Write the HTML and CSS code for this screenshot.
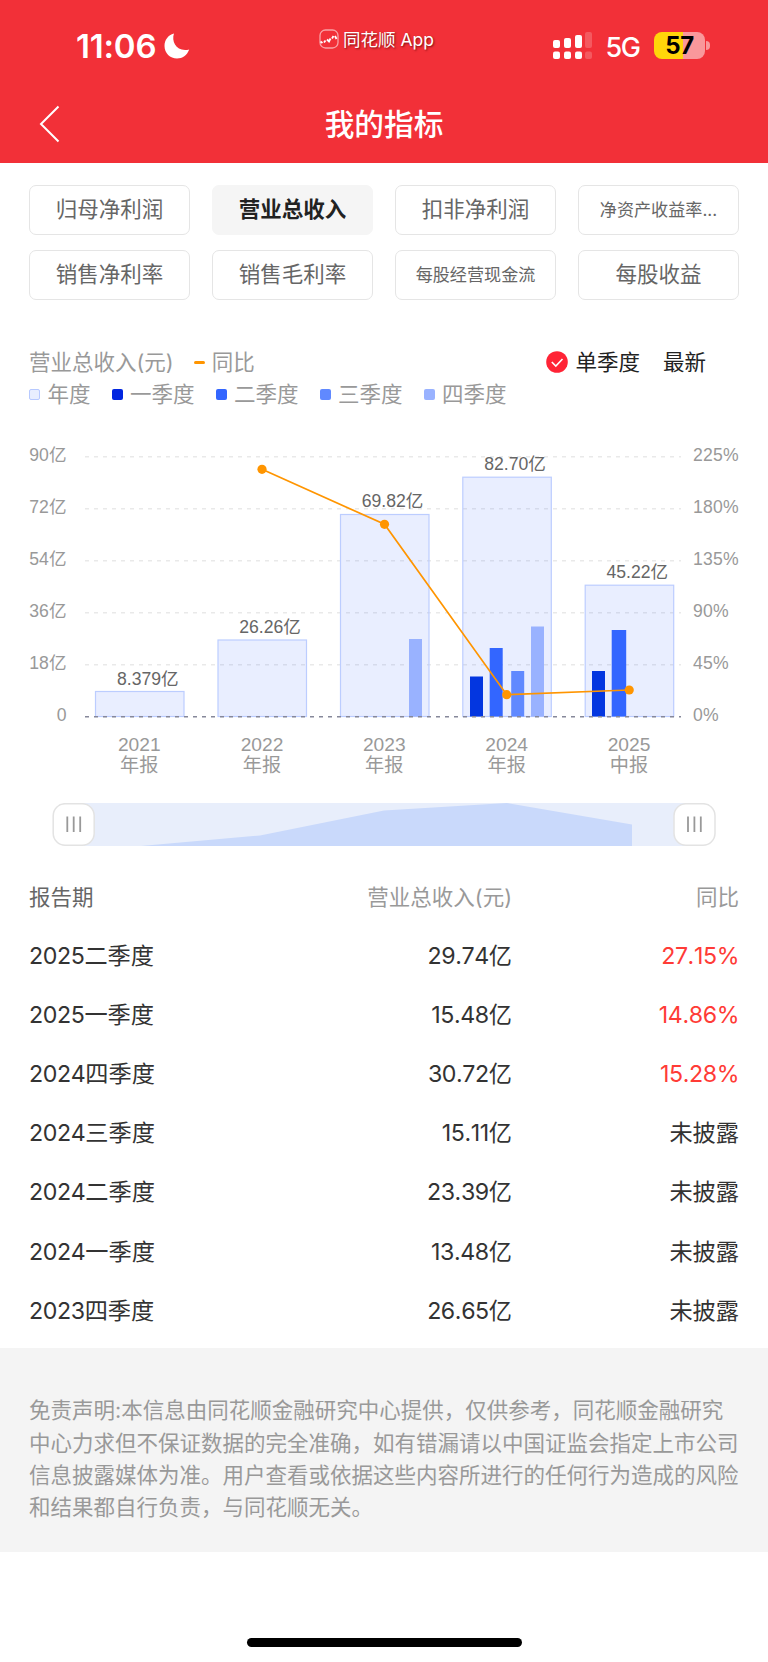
FILE: index.html
```
<!DOCTYPE html>
<html lang="zh-CN">
<head>
    <meta charset="UTF-8">
    <meta name="viewport" content="width=device-width, initial-scale=1.0">
    <title>我的指标</title>
    <link rel="stylesheet" href="styles.css">
</head>
<body>
    <header>
        <div class="status-bar">
            <div class="status-left">
                <span class="time">11:06</span>
                <svg class="moon" width="26" height="26" viewBox="0 0 26 26"><path d="M10 .5C7 9 13 19.500 25.200 16.500C23 22.500 18.500 25.500 13 25.500C6 25.500.500 20 .500 13C.500 7 4 2.200 10 .500Z" fill="#fff"/></svg>
            </div>
            <div class="app-mark">
                <svg width="20" height="20" viewBox="0 0 20 20" fill="none" stroke="#fff">
                    <rect x="1" y="1" width="18" height="18" rx="5.500" stroke-opacity=".55" stroke-width="1.300"/>
                    <path d="M1.500 12.500l2 1.500M5 13.500l1.500-2M8 10.500l2 2 1.500-3M13 9.500l1.500-2.500M16 7l1.500 3" stroke-width="1.800"/>
                </svg>
                <span>同花顺 App</span>
            </div>
            <div class="status-right">
                <svg class="signal" width="40" height="28" viewBox="0 0 40 28" fill="#fff">
                    <rect x="0" y="8" width="7" height="8" rx="2"/>
                    <rect x="11" y="6" width="7" height="10" rx="2"/>
                    <rect x="22" y="3" width="7" height="13" rx="2"/>
                    <rect x="32" y="0" width="7" height="16" rx="2" opacity=".2"/>
                    <rect x="0" y="19.500" width="7" height="7.500" rx="2"/>
                    <rect x="11" y="19.500" width="7" height="7.500" rx="2"/>
                    <rect x="22" y="19.500" width="7" height="7.500" rx="2"/>
                    <rect x="32" y="19.500" width="7" height="7.500" rx="2" opacity=".2"/>
                </svg>
                <span class="network">5G</span>
                <span class="battery">57</span>
                <span class="battery-cap"></span>
            </div>
        </div>
        <div class="title-bar">
            <svg class="back" width="22" height="38" viewBox="0 0 22 38"><path d="M19.500 1.500L2 19L19.500 36.500" fill="none" stroke="#fff" stroke-width="2"/></svg>
            <h1>我的指标</h1>
        </div>
    </header>

    <nav>
        <a>归母净利润</a>
        <a class="active">营业总收入</a>
        <a>扣非净利润</a>
        <a class="small">净资产收益率...</a>
        <a>销售净利率</a>
        <a>销售毛利率</a>
        <a class="small">每股经营现金流</a>
        <a>每股收益</a>
    </nav>

    <section class="chart">
        <div class="legend">
            <span>营业总收入(元)</span>
            <span class="dash"></span>
            <span>同比</span>
            <div class="options">
                <svg width="22" height="22" viewBox="0 0 22 22"><circle cx="11" cy="11" r="10.800" fill="#ff2436"/><path d="M5.800 11L9.800 15L16.500 8" fill="none" stroke="#fff" stroke-width="1.600"/></svg>
                <span>单季度</span>
                <span class="latest">最新</span>
            </div>
        </div>
        <div class="legend quarters">
            <span class="item"><i class="year"></i>年度</span>
            <span class="item"><i class="q1"></i>一季度</span>
            <span class="item"><i class="q2"></i>二季度</span>
            <span class="item"><i class="q3"></i>三季度</span>
            <span class="item"><i class="q4"></i>四季度</span>
        </div>

        <svg class="plot" width="768" height="360" viewBox="0 430 768 360">
            <!-- 网格线 -->
            <g class="grid">
                <path d="M85 456.700H681M85 508.800H681M85 560.800H681M85 612.800H681M85 664.800H681"/>
            </g>
            <!-- 年度柱 -->
            <g class="annual">
                <rect x="95.500" y="691.500" width="88.500" height="25"/>
                <rect x="218" y="640" width="88.500" height="76.500"/>
                <rect x="340.500" y="514.500" width="88.500" height="202"/>
                <rect x="462.800" y="477.200" width="88.500" height="239.300"/>
                <rect x="585.200" y="585.200" width="88.500" height="131.300"/>
            </g>
            <!-- 季度柱 -->
            <rect class="q4" x="409" y="639" width="13" height="77.500"/>
            <rect class="q1" x="470" y="676.500" width="13" height="40"/>
            <rect class="q2" x="489.700" y="648" width="13" height="68.500"/>
            <rect class="q3" x="511.200" y="671" width="13" height="45.500"/>
            <rect class="q4" x="531" y="626.500" width="13" height="90"/>
            <rect class="q1" x="592" y="671" width="13" height="45.500"/>
            <rect class="q2" x="611.700" y="630" width="14.500" height="86.500"/>
            <path class="base" d="M85 716.700H681"/>
            <!-- 同比 -->
            <path class="line" d="M262 469.300L384.500 524.300L506.700 694.700L629.200 690"/>
            <g class="dots">
                <circle cx="262" cy="469.300" r="4.600"/>
                <circle cx="384.500" cy="524.300" r="4.600"/>
                <circle cx="506.700" cy="694.700" r="4.600"/>
                <circle cx="629.200" cy="690" r="4.600"/>
            </g>
            <g class="axis left">
                <text x="66.500" y="461">90亿</text>
                <text x="66.500" y="513">72亿</text>
                <text x="66.500" y="565">54亿</text>
                <text x="66.500" y="617">36亿</text>
                <text x="66.500" y="669">18亿</text>
                <text x="66.500" y="721">0</text>
            </g>
            <g class="axis right">
                <text x="693" y="461">225%</text>
                <text x="693" y="513">180%</text>
                <text x="693" y="565">135%</text>
                <text x="693" y="617">90%</text>
                <text x="693" y="669">45%</text>
                <text x="693" y="721">0%</text>
            </g>
            <g class="values">
                <text x="147.800" y="684.500">8.379亿</text>
                <text x="270" y="633.200">26.26亿</text>
                <text x="392.500" y="507">69.82亿</text>
                <text x="515" y="470">82.70亿</text>
                <text x="637.300" y="578">45.22亿</text>
            </g>
            <g class="periods">
                <text x="139.300" y="751">2021</text><text x="139.300" y="771.500">年报</text>
                <text x="262" y="751">2022</text><text x="262" y="771.500">年报</text>
                <text x="384.300" y="751">2023</text><text x="384.300" y="771.500">年报</text>
                <text x="506.700" y="751">2024</text><text x="506.700" y="771.500">年报</text>
                <text x="629" y="751">2025</text><text x="629" y="771.500">中报</text>
            </g>
        </svg>

        <!-- 时间范围滑块 -->
        <svg class="slider" width="768" height="44" viewBox="0 0 768 44">
            <rect x="73" y="0" width="622" height="43" fill="#e8eefb"/>
            <path d="M141 43L260 32.500L384 7.500L507 0L632 21.500V43Z" fill="#c9d9fb"/>
            <g class="handle">
                <rect x="53.200" y=".7" width="41" height="41.500" rx="12"/>
                <path d="M67.300 13.500V29M73.700 13.500V29M80.200 13.500V29"/>
            </g>
            <g class="handle">
                <rect x="674" y=".7" width="41" height="41.500" rx="12"/>
                <path d="M688 13.500V29M694.400 13.500V29M700.800 13.500V29"/>
            </g>
        </svg>
    </section>

    <table>
        <thead>
            <tr><th>报告期</th><th>营业总收入(元)</th><th>同比</th></tr>
        </thead>
        <tbody>
            <tr><td><b>2025</b>二季度</td><td><b>29.74</b>亿</td><td class="up"><b>27.15%</b></td></tr>
            <tr><td><b>2025</b>一季度</td><td><b>15.48</b>亿</td><td class="up"><b>14.86%</b></td></tr>
            <tr><td><b>2024</b>四季度</td><td><b>30.72</b>亿</td><td class="up"><b>15.28%</b></td></tr>
            <tr><td><b>2024</b>三季度</td><td><b>15.11</b>亿</td><td>未披露</td></tr>
            <tr><td><b>2024</b>二季度</td><td><b>23.39</b>亿</td><td>未披露</td></tr>
            <tr><td><b>2024</b>一季度</td><td><b>13.48</b>亿</td><td>未披露</td></tr>
            <tr><td><b>2023</b>四季度</td><td><b>26.65</b>亿</td><td>未披露</td></tr>
        </tbody>
    </table>

    <footer>
        <p>免责声明:本信息由同花顺金融研究中心提供，仅供参考，同花顺金融研究<br>中心力求但不保证数据的完全准确，如有错漏请以中国证监会指定上市公司<br>信息披露媒体为准。用户查看或依据这些内容所进行的任何行为造成的风险<br>和结果都自行负责，与同花顺无关。</p>
    </footer>
    <div class="home-indicator"></div>
</body>
</html>
```
FILE: styles.css
```
* {
    box-sizing: border-box;
}
body {
    font-family: Inter, "Noto Sans CJK SC", sans-serif;
    background-color: #fff;
    color: #333;
    margin: 0;
    font-size: 21.5px;
}
svg {
    display: block;
    flex: none;
}
header {
    background-color: #f23038;
    color: white;
    height: 163px;
}
.status-bar {
    display: grid;
    grid-template-columns: 319px 1fr 215px;
    height: 85px;
}
.status-left {
    display: flex;
    padding: 26px 0 0 76px;
    gap: 9px;
}
.time {
    width: 79px;
    font-size: 33px;
    line-height: 40px;
    font-weight: 600;
    letter-spacing: -0.2px;
    white-space: nowrap;
}
.moon {
    margin-top: 7px;
}
.app-mark {
    display: flex;
    gap: 4px;
    padding-top: 28px;
    font-size: 17.5px;
    line-height: 24px;
    text-shadow: 1px 1px 2px rgba(80, 0, 0, 0.7);
    white-space: nowrap;
}
.app-mark svg {
    margin-top: 1px;
}
.status-right {
    display: flex;
    padding-top: 32px;
}
.network {
    width: 48.5px;
    margin-left: 12.5px;
    font-size: 27px;
    font-weight: 500;
    line-height: 31px;
    letter-spacing: -1.5px;
}
.battery {
    width: 51px;
    height: 27px;
    border-radius: 8px;
    background: linear-gradient(to right, #ffd60a 56%, #f9989b 56%);
    color: #000;
    font-size: 24px;
    font-weight: 700;
    line-height: 27px;
    letter-spacing: -0.5px;
    text-align: center;
}
.battery-cap {
    width: 4px;
    height: 9px;
    margin: 9px 0 0 1px;
    border-radius: 0 4px 4px 0;
    background-color: #f9989b;
}
.title-bar {
    display: flex;
    align-items: center;
    height: 78px;
    padding: 0 39px;
}
.title-bar h1 {
    flex: 1;
    margin: -4px 22px 0 0;
    font-size: 29.7px;
    font-weight: 500;
    text-align: center;
}
nav {
    display: grid;
    grid-template-columns: repeat(4, 161px);
    gap: 15px 22px;
    padding: 22px 29px 0;
}
nav a {
    height: 50px;
    border: 1.5px solid #e5e5e5;
    border-radius: 7px;
    color: #666;
    line-height: 46px;
    text-align: center;
    white-space: nowrap;
}
nav a.active {
    background-color: #f5f5f5;
    border-color: #f5f5f5;
    color: #222;
    font-weight: 600;
}
nav a.small {
    font-size: 17.1px;
    line-height: 47px;
}
.chart {
    padding-top: 46px;
}
.legend {
    display: flex;
    align-items: center;
    height: 32px;
    padding: 0 29px;
    color: #999;
    white-space: nowrap;
}
.legend span {
    line-height: 30px;
    margin-top: -1px;
}
.legend .dash {
    width: 11px;
    height: 3.5px;
    margin: 1px 7px 0 20px;
    border-radius: 1.5px;
    background-color: #ff9500;
}
.options {
    display: flex;
    align-items: center;
    margin-left: auto;
    padding-right: 33px;
    color: #222;
}
.options span {
    margin-left: 7px;
}
.options .latest {
    margin-left: 23px;
}
.quarters {
    gap: 21px;
}
.item {
    display: flex;
    align-items: center;
}
.item i {
    width: 11px;
    height: 11px;
    margin: 1px 7.5px 0 0;
    border-radius: 2px;
}
i.year {
    background-color: #e8eeff;
    border: 1px solid #b7c9ff;
}
i.q1 {
    background-color: #0226e0;
}
i.q2 {
    background-color: #3366ff;
}
i.q3 {
    background-color: #6089ff;
}
i.q4 {
    background-color: #99b2ff;
}
.plot {
    margin-top: 20px;
    font-family: "Liberation Sans", "Noto Sans CJK SC", sans-serif;
}
.grid path {
    stroke: #e9e9e9;
    stroke-width: 1.6;
    stroke-dasharray: 4 5;
}
.base {
    stroke: #86889a;
    stroke-width: 1.6;
    stroke-dasharray: 4 5;
}
.annual rect {
    fill: rgba(51, 102, 255, 0.11);
    stroke: #bccdff;
    stroke-width: 1.2;
}
rect.q1 {
    fill: #0336e0;
}
rect.q2 {
    fill: #3366ff;
}
rect.q3 {
    fill: #6089ff;
}
rect.q4 {
    fill: #99b2ff;
}
.line {
    fill: none;
    stroke: #ff9500;
    stroke-width: 1.7;
}
.dots circle {
    fill: #ff9500;
}
.axis text {
    fill: #999;
    font-size: 17.6px;
}
.left text {
    text-anchor: end;
}
.right text {
    letter-spacing: 0.2px;
}
.values text {
    fill: #666;
    font-size: 17.6px;
    text-anchor: middle;
}
.periods text {
    fill: #999;
    font-size: 19.2px;
    text-anchor: middle;
}
.slider {
    margin-top: 13px;
}
.handle rect {
    fill: #fff;
    stroke: #e3e3e3;
    stroke-width: 1.5;
}
.handle path {
    stroke: #999;
    stroke-width: 1.8;
}
table {
    width: 710px;
    margin: 18px 29px 0;
    border-collapse: collapse;
    table-layout: fixed;
}
th {
    width: 227px;
    height: 61px;
    padding: 0;
    color: #999;
    font-weight: 400;
    text-align: right;
}
th:first-child {
    width: 256px;
    color: #666;
}
th:first-child,
td:first-child {
    text-align: left;
}
td {
    height: 59.2px;
    padding: 0;
    font-size: 23.2px;
    line-height: 30px;
    text-align: right;
}
td b {
    font-weight: 400;
    font-kerning: none;
    letter-spacing: -0.4px;
}
td.up {
    color: #ff3b36;
}
footer {
    height: 204px;
    margin-top: 8px;
    padding: 46px 29px 0;
    background-color: #f4f4f4;
    color: #999;
}
footer p {
    margin: 0;
    line-height: 32.3px;
    white-space: nowrap;
}
.home-indicator {
    width: 275px;
    height: 9px;
    margin: 86px auto 0;
    border-radius: 5px;
    background-color: #000;
}
```
